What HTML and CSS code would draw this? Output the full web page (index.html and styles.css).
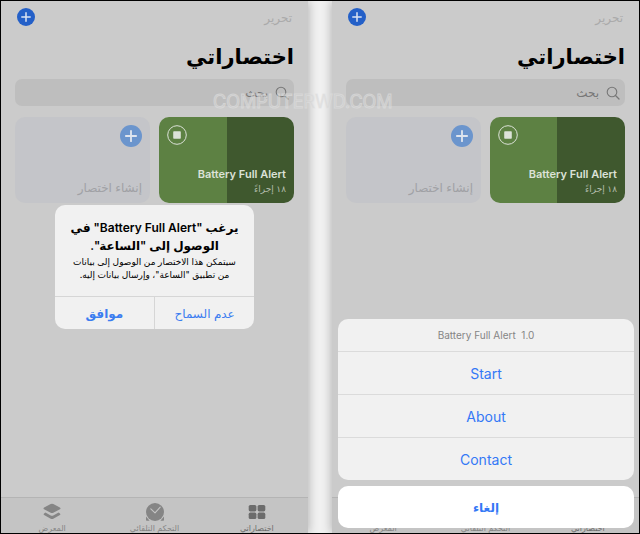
FILE: index.html
```html
<!DOCTYPE html>
<html lang="ar">
  <head>
    <meta charset="utf-8">
    <meta name="viewport" content="width=device-width, initial-scale=1">
    <title>Battery Full Alert</title>
    <link rel="stylesheet" href="styles.css">
  </head>
  <body>
    <svg class="symbols" aria-hidden="true">
      <symbol id="plus" viewBox="0 0 18 18">
        <path d="M9 4.800v8.400M4.800 9h8.400" stroke="currentColor" stroke-width="1.5" stroke-linecap="round"/>
      </symbol>
      <symbol id="search" viewBox="0 0 14 14">
        <circle cx="6" cy="6" r="4.8" fill="none" stroke="currentColor" stroke-width="1.1"/>
        <path d="M9.5 9.5l3.5 3.5" stroke="currentColor" stroke-width="1.3" stroke-linecap="round"/>
      </symbol>
      <symbol id="stop" viewBox="0 0 20 20">
        <circle cx="10" cy="10" r="9.3" fill="none" stroke="currentColor" stroke-width="1"/>
        <rect x="6.2" y="6.2" width="7.6" height="7.6" rx="0.8" fill="currentColor"/>
      </symbol>
      <symbol id="grid" viewBox="0 0 20 20">
        <rect x="1.7" y="3" width="7.7" height="6.4" rx="1.6"/>
        <rect x="10.6" y="3" width="7.7" height="6.4" rx="1.6"/>
        <rect x="1.7" y="10.6" width="7.7" height="6.4" rx="1.6"/>
        <rect x="10.6" y="10.6" width="7.7" height="6.4" rx="1.6"/>
      </symbol>
      <symbol id="clock" viewBox="0 0 20 20">
        <path d="M1 14.5L4.6 18.8H1.8Q1 18.8 1 18zM19 14.5L15.4 18.8H18.2Q19 18.8 19 18z"/>
        <circle cx="10" cy="10" r="9"/>
        <path d="M5.8 6.8l4.2 4 5.2-5.6" fill="none" stroke="#c4c4c4" stroke-width="1.1" stroke-linecap="round" stroke-linejoin="round"/>
      </symbol>
      <symbol id="layers" viewBox="0 0 20 20">
        <path d="M8.7 2q1.3-.6 2.6 0l6.6 3.6q1.2.8 0 1.6l-6.6 3.6q-1.3.6-2.6 0L2.1 7.2q-1.2-.8 0-1.6z"/>
        <path d="M3.4 10.6l5.3 2.8q1.3.6 2.6 0l5.3-2.8 1.3.8q1.2.8 0 1.6l-6.6 3.7q-1.3.6-2.6 0L2.1 13q-1.2-.8 0-1.6z"/>
      </symbol>
    </svg>

    <div class="screens">
      <section class="phone" dir="rtl">
        <header class="top">
          <button class="edit">تحرير</button>
          <button class="add" aria-label="إضافة"><svg><use href="#plus"/></svg></button>
        </header>
        <main class="content">
          <h1>اختصاراتي</h1>
          <label class="search">
            <svg><use href="#search"/></svg>
            <input type="text" placeholder="بحث" aria-label="بحث">
          </label>
          <div class="cards">
            <button class="card running">
              <svg class="stop"><use href="#stop"/></svg>
              <span class="name">Battery Full Alert</span>
              <span class="count">١٨ إجراءً</span>
            </button>
            <button class="card create">
              <span class="badge"><svg><use href="#plus"/></svg></span>
              <span class="label">إنشاء اختصار</span>
            </button>
          </div>
        </main>
        <nav class="tabs">
          <a href="#shortcuts" class="active"><svg><use href="#grid"/></svg>اختصاراتي</a>
          <a href="#automation"><svg><use href="#clock"/></svg>التحكم التلقائي</a>
          <a href="#gallery"><svg><use href="#layers"/></svg>المعرض</a>
        </nav>
        <div class="overlay">
          <div class="alert" role="alertdialog" aria-labelledby="alert-title">
            <div class="message">
              <h2 id="alert-title">يرغب "Battery Full Alert" في<br>الوصول إلى "الساعة".</h2>
              <p>سيتمكن هذا الاختصار من الوصول إلى بيانات<br>من تطبيق "الساعة"، وإرسال بيانات إليه.</p>
            </div>
            <div class="actions">
              <button>عدم السماح</button>
              <button class="ok">موافق</button>
            </div>
          </div>
        </div>
      </section>

      <section class="phone" dir="rtl">
        <header class="top">
          <button class="edit">تحرير</button>
          <button class="add" aria-label="إضافة"><svg><use href="#plus"/></svg></button>
        </header>
        <main class="content">
          <h1>اختصاراتي</h1>
          <label class="search">
            <svg><use href="#search"/></svg>
            <input type="text" placeholder="بحث" aria-label="بحث">
          </label>
          <div class="cards">
            <button class="card running">
              <svg class="stop"><use href="#stop"/></svg>
              <span class="name">Battery Full Alert</span>
              <span class="count">١٨ إجراءً</span>
            </button>
            <button class="card create">
              <span class="badge"><svg><use href="#plus"/></svg></span>
              <span class="label">إنشاء اختصار</span>
            </button>
          </div>
        </main>
        <nav class="tabs">
          <a href="#shortcuts" class="active"><svg><use href="#grid"/></svg>اختصاراتي</a>
          <a href="#automation"><svg><use href="#clock"/></svg>التحكم التلقائي</a>
          <a href="#gallery"><svg><use href="#layers"/></svg>المعرض</a>
        </nav>
        <div class="sheet">
          <div class="menu" dir="ltr">
            <p>Battery Full Alert&nbsp; 1.0</p>
            <button>Start</button>
            <button>About</button>
            <button>Contact</button>
          </div>
          <button class="cancel">إلغاء</button>
        </div>
      </section>
      <div class="watermark">COMPUTERWD.COM</div>
    </div>
  </body>
</html>
```

FILE: styles.css
```css
* {
  box-sizing: border-box;
}
body {
  margin: 0;
  font-family: Inter, "DejaVu Sans", sans-serif;
}
h1, h2, p {
  margin: 0;
}
button {
  border: 0;
  padding: 0;
  background: none;
  font-family: inherit;
  color: inherit;
}
.symbols {
  display: none;
}
.screens {
  position: relative;
  display: flex;
  gap: 24px;
  height: 100vh;
  border: 1px solid #000;
  background: #f1f1f1;
  overflow: hidden;
}
.phone {
  position: relative;
  display: flex;
  flex: 1;
  flex-direction: column;
  min-width: 0;
  background: #cbcbcb;
  box-shadow: 0 0 10px rgba(0, 0, 0, 0.3);
}

/* header */
.top {
  display: flex;
  justify-content: space-between;
  align-items: center;
  height: 32px;
  padding: 0 16px;
}
.edit {
  font-size: 12px;
  color: #aaa;
}
.add {
  width: 18px;
  height: 18px;
  border-radius: 50%;
  background: #2460c8;
  color: #dbe3f2;
}
.add svg {
  display: block;
  width: 18px;
  height: 18px;
}

/* page */
.content {
  flex: 1;
  padding: 0 14px;
}
h1 {
  height: 46px;
  font-size: 21px;
  line-height: 48px;
}
.search {
  display: flex;
  align-items: center;
  gap: 7px;
  height: 27px;
  padding: 0 5px;
  border-radius: 7px;
  background: #bebebe;
  color: #777;
}
.search svg {
  width: 14px;
  height: 14px;
}
.search input {
  flex: 1;
  min-width: 0;
  border: 0;
  padding: 0;
  background: none;
  font-family: inherit;
  font-size: 12px;
}
.search input::placeholder {
  color: #777;
}
.cards {
  display: grid;
  grid-template-columns: 1fr 1fr;
  gap: 9px;
  margin-top: 11px;
}
.card {
  display: flex;
  flex-direction: column;
  align-items: flex-start;
  height: 86px;
  padding: 8px;
  border-radius: 10px;
}
.running {
  background: linear-gradient(to right, #5d8143 50%, #3f582e 50%);
  color: #dce2d8;
}
.stop {
  align-self: flex-end;
  width: 20px;
  height: 20px;
}
.name {
  margin-top: auto;
  font-size: 11px;
  font-weight: 600;
  line-height: 15px;
}
.count {
  font-size: 9px;
  line-height: 13px;
  color: #b4bdad;
}
.create {
  background: #c4c5c9;
}
.badge {
  width: 22px;
  height: 22px;
  border-radius: 50%;
  background: #6b95cd;
  color: #dfe5ee;
}
.badge svg {
  display: block;
  width: 22px;
  height: 22px;
}
.label {
  margin-top: auto;
  font-size: 12px;
  line-height: 15px;
  color: #a0a1a5;
}

/* bottom tabs */
.tabs {
  display: flex;
  height: 36px;
  border-top: 1px solid #b4b4b4;
  background: #c4c4c4;
}
.tabs a {
  display: flex;
  flex: 1;
  flex-direction: column;
  align-items: center;
  padding-top: 4px;
  font-size: 8px;
  line-height: 12px;
  color: #858585;
  text-decoration: none;
}
.tabs svg {
  flex: none;
  width: 20px;
  height: 20px;
  fill: currentColor;
}
.tabs .active {
  color: #6c6c6c;
}

/* permission alert */
.overlay {
  position: absolute;
  inset: 0;
  display: flex;
  align-items: center;
  justify-content: center;
}
.alert {
  width: 65%;
  border-radius: 10px;
  background: #f1f1f1;
  text-align: center;
  overflow: hidden;
}
.message {
  padding: 14px 0 15px;
  white-space: nowrap;
}
.message h2 {
  font-size: 12px;
  font-weight: 600;
  line-height: 18px;
}
.message p {
  font-size: 9px;
  line-height: 13px;
}
.actions {
  display: flex;
  border-top: 1px solid #d6d6d6;
}
.actions button {
  flex: 1;
  height: 32px;
  font-size: 12px;
  color: #3b7df0;
}
.actions .ok {
  border-right: 1px solid #d6d6d6;
  font-weight: bold;
}

/* action sheet */
.sheet {
  position: absolute;
  right: 5px;
  bottom: 5px;
  left: 6px;
  display: flex;
  flex-direction: column;
  gap: 6px;
}
.menu {
  display: flex;
  flex-direction: column;
  border-radius: 10px;
  background: #f1f1f1;
  text-align: center;
}
.menu p {
  font-size: 10px;
  line-height: 32px;
  color: #858585;
}
.menu button {
  height: 43px;
  border-top: 1px solid #dbdbdb;
  font-size: 14px;
  color: #3478f6;
}
.cancel {
  height: 42px;
  border-radius: 10px;
  background: #fff;
  font-size: 12px;
  font-weight: bold;
  color: #3478f6;
}

.watermark {
  position: absolute;
  top: 92px;
  left: 212px;
  font-size: 18px;
  font-weight: 400;
  line-height: 18px;
  color: rgba(200, 200, 200, 0.4);
  -webkit-text-stroke: 1px rgba(225, 225, 225, 0.6);
  pointer-events: none;
}
```
